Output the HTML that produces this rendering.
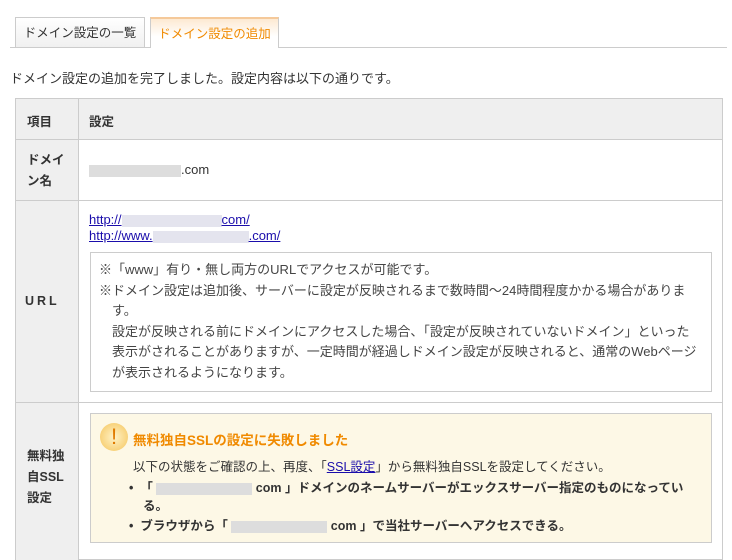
<html><head><style>
body{margin:0;width:732px;height:550px;overflow:hidden;background:#fff;font-family:"Liberation Sans","Noto Sans CJK JP",sans-serif;font-size:13px;color:#333}
.a{position:absolute}
.tab{position:absolute;top:17px;height:30px;border:1px solid #ccc;border-bottom:none;box-sizing:border-box;font-size:12.5px;line-height:30px;text-align:center}
.bl{background:#ddd;display:inline-block;height:12px;vertical-align:middle}
.c{position:absolute;left:0;font-weight:bold;font-size:12.5px}
a{color:#1a0dab;text-decoration:underline}
</style></head><body>
<div class="a" style="left:10px;top:47px;width:717px;height:1px;background:#ccc"></div>
<div class="tab" style="left:15px;width:130px;background:linear-gradient(#fff,#f0f0f0);color:#333">ドメイン設定の一覧</div>
<div class="tab" style="left:150px;width:129px;height:31px;background:linear-gradient(#fde9d2,#fff 60%);color:#f08a00;border-top:2px solid #f5c99a">ドメイン設定の追加</div>
<div class="a" style="left:10px;top:68px">ドメイン設定の追加を完了しました。設定内容は以下の通りです。</div>
<div class="a" style="left:15px;top:98px;width:706px;height:460px;border:1px solid #ccc;background:#fff">
 <div class="a" style="left:0;top:0;width:706px;height:40px;background:#efefef;border-bottom:1px solid #ccc"></div>
 <div class="a" style="left:0;top:41px;width:62px;height:420px;background:#efefef;border-right:1px solid #ccc"></div>
 <div class="a" style="left:62px;top:0;width:1px;height:41px;background:#ccc"></div>
 <div class="a" style="left:0;top:101px;width:706px;height:1px;background:#ccc"></div>
 <div class="a" style="left:0;top:303px;width:706px;height:1px;background:#ccc"></div>
 <div class="c" style="left:11px;top:12px">項目</div>
 <div class="c" style="left:73px;top:12px">設定</div>
 <div class="c" style="left:11px;top:51px;line-height:21px">ドメイ<br>ン名</div>
 <div class="a" style="left:73px;top:63px"><span class="bl" style="width:92px"></span>.com</div>
 <div class="c" style="left:9px;top:195px;letter-spacing:3px">URL</div>
 <div class="a" style="left:73px;top:113px;line-height:16px"><a>http://<span class="bl" style="width:100px;background:#e4e4ee"></span>com/</a><br><a>http://www.<span class="bl" style="width:96px;background:#e4e4ee"></span>.com/</a></div>
 <div class="a" style="left:74px;top:153px;width:620px;height:138px;border:1px solid #ccc;font-size:13px;line-height:20.4px;color:#444">
  <div class="a" style="left:8px;top:7px">※「www」有り・無し両方のURLでアクセスが可能です。</div>
  <div class="a" style="left:8px;top:28px;width:598px;padding-left:13px;text-indent:-13px">※ドメイン設定は追加後、サーバーに設定が反映されるまで数時間～24時間程度かかる場合がありま<br>す。<br>設定が反映される前にドメインにアクセスした場合、「設定が反映されていないドメイン」といった<br>表示がされることがありますが、一定時間が経過しドメイン設定が反映されると、通常のWebページ<br>が表示されるようになります。</div>
 </div>
 <div class="c" style="left:11px;top:347px;line-height:21px">無料独<br>自SSL<br>設定</div>
 <div class="a" style="left:74px;top:314px;width:620px;height:128px;border:1px solid #ccc;background:#fdf8e6;font-size:12.5px">
  <div class="a" style="left:9px;top:9px;width:28px;height:28px;border-radius:50%;background:radial-gradient(#fff3c8,#f5c45a);color:#e07b00;font-size:22px;line-height:28px;text-align:center">!</div>
  <div class="a" style="left:42px;top:15px;color:#f08a00;font-weight:bold;font-size:13.5px">無料独自SSLの設定に失敗しました</div>
  <div class="a" style="left:42px;top:42px">以下の状態をご確認の上、再度、「<a>SSL設定</a>」から無料独自SSLを設定してください。</div>
  <div class="a" style="left:38px;top:65px;width:560px;line-height:18px;font-weight:bold;padding-left:14px;text-indent:-14px">•&nbsp;&nbsp;「 <span class="bl" style="width:96px"></span> com 」ドメインのネームサーバーがエックスサーバー指定のものになっている。</div>
  <div class="a" style="left:38px;top:101px;font-weight:bold">•&nbsp;&nbsp;ブラウザから「 <span class="bl" style="width:96px"></span> com 」で当社サーバーへアクセスできる。</div>
 </div>
</div>
</body></html>
